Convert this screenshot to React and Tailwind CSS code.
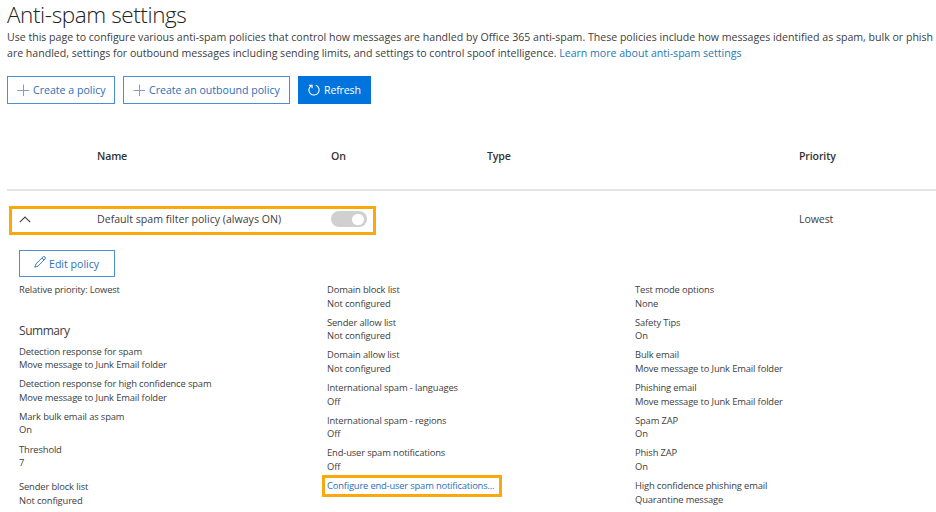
const columns = [
  [
    ["Detection response for spam", "Move message to Junk Email folder"],
    ["Detection response for high confidence spam", "Move message to Junk Email folder"],
    ["Mark bulk email as spam", "On"],
    ["Threshold", "7"],
  ],
  [
    ["Domain block list", "Not configured"],
    ["Sender allow list", "Not configured"],
    ["Domain allow list", "Not configured"],
    ["International spam - languages", "Off"],
    ["International spam - regions", "Off"],
    ["End-user spam notifications", "Off"],
  ],
  [
    ["Test mode options", "None"],
    ["Safety Tips", "On"],
    ["Bulk email", "Move message to Junk Email folder"],
    ["Phishing email", "Move message to Junk Email folder"],
    ["Spam ZAP", "On"],
    ["Phish ZAP", "On"],
    ["High confidence phishing email", "Quarantine message"],
  ],
];

function Setting({ label, value }) {
  return (
    <div className="h-[32.7px]">
      <div>{label}</div>
      <div>{value}</div>
    </div>
  );
}

function Settings({ items }) {
  return items.map(([label, value]) => <Setting key={label} label={label} value={value} />);
}

function Plus() {
  return (
    <svg className="h-3 w-3 shrink-0" viewBox="0 0 12 12" fill="none" stroke="#7f9fc4" strokeWidth="1">
      <path d="M6.5 0.5V12M0.5 6.5H12" />
    </svg>
  );
}

function RefreshIcon() {
  return (
    <svg className="h-3 w-3 shrink-0" viewBox="0 0 12 12" fill="none" stroke="#fff" strokeWidth="1.1">
      <path d="M7.8 1.2A5.1 5.1 0 1 1 3.2 1.7M1 1.2H4.1V4.3" />
    </svg>
  );
}

function Pencil() {
  return (
    <svg className="-mt-[3px] h-3 w-3 shrink-0" viewBox="0 0 12 12" fill="none" stroke="#2b6fb8" strokeWidth="0.9">
      <path d="M0.8 11.2L1.9 8L8.9 1A1.3 1.3 0 0 1 11 3L4 10.1ZM7.9 2L10 4" />
    </svg>
  );
}

export default function App() {
  return (
    <div className="h-[512px] w-[936px] overflow-hidden whitespace-nowrap bg-white pl-[7px] font-['Open_Sans','Noto_Sans',sans-serif] text-[10.6px] text-[#404040]">
      <h1 className="h-[29px] text-[22.5px] font-light leading-[29px] tracking-[-0.4px] text-[#222]">Anti-spam settings</h1>
      <div className="leading-4 tracking-[-0.011px]">
        <p>
          Use this page to configure various anti-spam policies that control how messages are handled by Office 365 anti-spam. These policies include how messages identified as spam, bulk or phish
        </p>
        <p>
          are handled, settings for outbound messages including sending limits, and settings to control spoof intelligence.{" "}
          <a className="text-[#2577b5]">Learn more about anti-spam settings</a>
        </p>
      </div>

      <div className="mt-[15px] flex h-7 gap-2 text-[#2b6fb8]">
        <button className="flex w-[108px] items-center gap-1 border border-[#4a8fd6] pl-[9px]">
          <Plus />
          <span className="pt-[2px]">Create a policy</span>
        </button>
        <button className="flex w-[167px] items-center gap-1 border border-[#4a8fd6] pl-[9px]">
          <Plus />
          <span className="pt-[2px]">Create an outbound policy</span>
        </button>
        <button className="flex w-[73px] items-center gap-1 bg-[#0073dc] pl-[10px] text-white">
          <RefreshIcon />
          <span className="pt-[2px] tracking-[-0.15px]">Refresh</span>
        </button>
      </div>

      <div className="mt-[43px] grid h-[42px] grid-cols-[90px_234px_156px_312px_auto] font-semibold leading-4 tracking-[-0.15px] text-[#333]">
        <span />
        <span className="pt-px">Name</span>
        <span className="pt-px">On</span>
        <span className="pt-px">Type</span>
        <span className="pt-px">Priority</span>
      </div>
      <div className="h-[2px] bg-[#e5e5e5]" />

      <div className="relative mt-[15px] grid h-[29px] grid-cols-[90px_234px_156px_312px_auto] items-center">
        <svg className="-mt-[3px] ml-3 h-[7px] w-3" viewBox="0 0 12 7" fill="none" stroke="#444" strokeWidth="1.1">
          <path d="M0.8 6.2L6 1L11.2 6.2" />
        </svg>
        <span className="-mt-px">Default spam filter policy (always ON)</span>
        <div className="-mt-[3px] flex h-4 w-9 items-center justify-end rounded-full bg-[#d0d0d0] pr-[3px]">
          <div className="h-[11px] w-[12px] rounded-full bg-white" />
        </div>
        <span />
        <span className="-mt-px tracking-[-0.1px]">Lowest</span>
        <div className="absolute left-[2px] top-0 h-[29px] w-[367px] border-[3px] border-[#f9a90b]" />
      </div>

      <div className="grid grid-cols-[308px_308px_auto] pl-3 pt-[15px] text-[9.4px] leading-[13.5px] tracking-[-0.14px]">
        <div>
          <button className="flex h-[27px] w-24 items-center gap-[3px] border border-[#4a8fd6] pl-[14px] text-[10.6px] tracking-normal text-[#2b6fb8]">
            <Pencil />
            <span className="pt-[2px]">Edit policy</span>
          </button>
          <div className="mt-[6px]">Relative priority: Lowest</div>
          <h2 className="mt-[25px] h-[23px] text-[12px] leading-[18px] tracking-[-0.45px]">Summary</h2>
          <Settings items={columns[0]} />
          <div className="pt-[5px]">
            <Setting label="Sender block list" value="Not configured" />
          </div>
        </div>
        <div className="pt-[33px]">
          <Settings items={columns[1]} />
          <div className="relative">
            <a className="tracking-[-0.18px] text-[#2b6fb8]">Configure end-user spam notifications...</a>
            <div className="absolute -left-[5px] -top-[4px] h-[22px] w-[180px] border-[3px] border-[#f9a90b]" />
          </div>
        </div>
        <div className="pt-[33px]">
          <Settings items={columns[2]} />
        </div>
      </div>
    </div>
  );
}
